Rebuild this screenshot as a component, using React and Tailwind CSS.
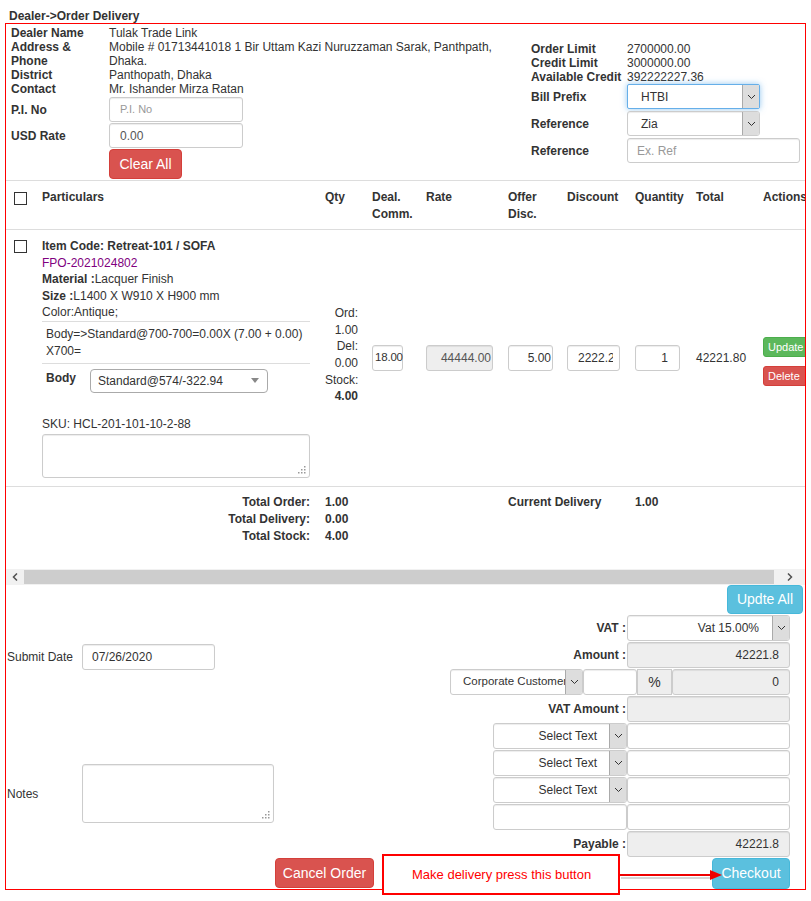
import React from 'react';

// gemeinsame Klassen für Eingabefelder
const box = 'border border-[#ccc] rounded-[3px] bg-white shadow-[inset_0_1px_1px_rgba(0,0,0,0.075)]';
const grey = 'border border-[#ccc] rounded-[3px] bg-[#eee] shadow-[inset_0_1px_1px_rgba(0,0,0,0.075)]';

function Chevron() {
  return (
    <svg width="9" height="6" viewBox="0 0 9 6">
      <path d="M1 1l3.5 3.5L8 1" fill="none" stroke="#333" strokeWidth="1" />
    </svg>
  );
}

function Grip() {
  return (
    <svg width="8" height="8" viewBox="0 0 8 8" className="absolute right-[3px] bottom-[3px]">
      <rect x="6" y="0" width="1.5" height="1.5" fill="#999" />
      <rect x="3" y="3" width="1.5" height="1.5" fill="#999" />
      <rect x="6" y="3" width="1.5" height="1.5" fill="#999" />
      <rect x="0" y="6" width="1.5" height="1.5" fill="#999" />
      <rect x="3" y="6" width="1.5" height="1.5" fill="#999" />
      <rect x="6" y="6" width="1.5" height="1.5" fill="#999" />
    </svg>
  );
}

function FakeSelect({ text, className, textClass }) {
  return (
    <div className={`flex overflow-hidden ${className}`}>
      <div className={`flex-1 flex items-center whitespace-nowrap overflow-hidden ${textClass}`}>{text}</div>
      <div className="w-[17px] shrink-0 bg-[#ddd] border-l border-[#aaa] flex items-center justify-center">
        <Chevron />
      </div>
    </div>
  );
}

function Check({ className }) {
  return <div className={`w-[13px] h-[13px] border border-[#333] bg-white ${className}`} />;
}

const cols = 'grid grid-cols-[36px_283px_47px_54px_82px_59px_68px_61px_67px_70px] w-[827px]';

export default function App() {
  return (
    <div className="relative w-[811px] h-[901px] bg-white font-['Liberation_Sans',Arial,sans-serif] text-[12px] text-[#333] pt-[9px]">
      <div className="pl-[9px] font-bold leading-[14px]">Dealer-&gt;Order Delivery</div>

      <div className="ml-[5px] w-[801px] border border-[#f00]">
        {/* Kopfbereich */}
        <div className="flex h-[157px] border-b border-[#ddd]">
          <div className="w-[525px] pl-[5px] pt-[2px]">
            <div className="grid grid-cols-[98px_400px] leading-[14px]">
              <b>Dealer Name</b>
              <span>Tulak Trade Link</span>
              <b className="pr-[20px]">Address &amp; Phone</b>
              <span>Mobile # 01713441018 1 Bir Uttam Kazi Nuruzzaman Sarak, Panthpath, Dhaka.</span>
              <b>District</b>
              <span>Panthopath, Dhaka</span>
              <b>Contact</b>
              <span>Mr. Ishander Mirza Ratan</span>
            </div>
            <div className="flex items-center mt-[1px]">
              <b className="w-[98px]">P.I. No</b>
              <div className={`w-[134px] h-[25px] flex items-center pl-[10px] text-[11px] text-[#999] ${box}`}>P.I. No</div>
            </div>
            <div className="flex items-center mt-[1px]">
              <b className="w-[98px]">USD Rate</b>
              <div className={`w-[134px] h-[25px] flex items-center pl-[10px] text-[#555] ${box}`}>0.00</div>
            </div>
            <button className="ml-[98px] mt-[1px] w-[73px] h-[30px] rounded-[4px] bg-[#d9534f] border border-[#d43f3a] text-white text-[14px]">
              Clear All
            </button>
          </div>
          <div className="pt-[18px]">
            <div className="grid grid-cols-[96px_auto] leading-[14px]">
              <b>Order Limit</b>
              <span>2700000.00</span>
              <b>Credit Limit</b>
              <span>3000000.00</span>
              <b>Available Credit</b>
              <span>392222227.36</span>
            </div>
            <div className="flex items-center">
              <b className="w-[96px]">Bill Prefix</b>
              <FakeSelect
                text="HTBI"
                className="w-[133px] h-[25px] border border-[#66afe9] rounded-[2px] bg-white shadow-[0_0_6px_rgba(102,175,233,0.7)]"
                textClass="pl-[13px]"
              />
            </div>
            <div className="flex items-center mt-[2px]">
              <b className="w-[96px]">Reference</b>
              <FakeSelect text="Zia" className={`w-[133px] h-[25px] ${box}`} textClass="pl-[13px]" />
            </div>
            <div className="flex items-center mt-[2px]">
              <b className="w-[96px]">Reference</b>
              <div className={`w-[173px] h-[25px] flex items-center pl-[9px] text-[#999] ${box}`}>Ex. Ref</div>
            </div>
          </div>
        </div>

        {/* Tabelle, horizontal abgeschnitten */}
        <div className="overflow-hidden">
          <div className={`${cols} h-[49px] border-b border-[#ddd] font-bold leading-[17px]`}>
            <div className="pl-[8px] pt-[11px]"><Check /></div>
            <div className="pt-[8px]">Particulars</div>
            <div className="pt-[8px]">Qty</div>
            <div className="pt-[8px]">Deal.<br />Comm.</div>
            <div className="pt-[8px]">Rate</div>
            <div className="pt-[8px]">Offer<br />Disc.</div>
            <div className="pt-[8px]">Discount</div>
            <div className="pt-[8px]">Quantity</div>
            <div className="pt-[8px]">Total</div>
            <div className="pt-[8px]">Actions</div>
          </div>

          <div className={`${cols} h-[257px] border-b border-[#ddd]`}>
            <div className="pl-[8px] pt-[10px]"><Check /></div>
            <div className="pt-[8px] pr-[15px]">
              <div className="leading-[16.5px]">
                <div className="font-bold">Item Code: Retreat-101 / SOFA</div>
                <div className="text-[#800080]">FPO-2021024802</div>
                <div><b>Material :</b>Lacquer Finish</div>
                <div><b>Size :</b>L1400 X W910 X H900 mm</div>
                <div>Color:Antique;</div>
              </div>
              <div className="border-t border-b border-[#ddd] pl-[4px] pt-[4px] pb-[3px] leading-[17px]">
                Body=&gt;Standard@700-700=0.00X (7.00 + 0.00) X700=
              </div>
              <div className="flex pl-[4px] pt-[5px]">
                <b className="w-[44px] leading-[17px] pt-[1px]">Body</b>
                <div className="w-[178px] h-[24px] border border-[#aaa] rounded-[4px] bg-white flex items-center justify-between pl-[7px] pr-[8px]">
                  <span>Standard@574/-322.94</span>
                  <svg width="8" height="5" viewBox="0 0 8 5"><path d="M0 0h8L4 5z" fill="#888" /></svg>
                </div>
              </div>
              <div className="mt-[23px] leading-[16.5px]">SKU: HCL-201-101-10-2-88</div>
              <div className={`relative mt-[2px] w-[268px] h-[44px] ${box}`}>
                <Grip />
              </div>
            </div>
            <div className="flex items-center pb-[6px]">
              <div className="w-[33px] text-right leading-[16.6px]">
                <div>Ord:</div>
                <div>1.00</div>
                <div>Del:</div>
                <div>0.00</div>
                <div>Stock:</div>
                <div className="font-bold">4.00</div>
              </div>
            </div>
            <div className="flex items-center">
              <div className={`w-[31px] h-[26px] flex items-center pl-[2px] whitespace-nowrap text-[11.5px] tracking-[-0.2px] ${box}`}>18.00</div>
            </div>
            <div className="flex items-center">
              <div className={`w-[67px] h-[26px] flex items-center justify-end pr-[1px] text-[#555] ${grey}`}>44444.00</div>
            </div>
            <div className="flex items-center">
              <div className={`w-[45px] h-[26px] flex items-center justify-end pr-[1px] ${box}`}>5.00</div>
            </div>
            <div className="flex items-center">
              <div className={`w-[53px] h-[26px] flex items-center pl-[10px] pr-[6px] ${box}`}>
                <div className="overflow-hidden whitespace-nowrap">2222.22</div>
              </div>
            </div>
            <div className="flex items-center">
              <div className={`w-[45px] h-[26px] flex items-center justify-end pr-[11px] ${box}`}>1</div>
            </div>
            <div className="flex items-center">42221.80</div>
            <div className="flex flex-col justify-center gap-[9px] pt-[7px]">
              <button className="w-[46px] h-[20px] rounded-[3px] bg-[#5cb85c] border border-[#4cae4c] text-white text-[11px] text-left pl-[4px]">Update</button>
              <button className="w-[46px] h-[20px] rounded-[3px] bg-[#d9534f] border border-[#d43f3a] text-white text-[11px] text-left pl-[4px]">Delete</button>
            </div>
          </div>

          <div className={`${cols} h-[82px] pt-[7px] font-bold leading-[17px]`}>
            <div />
            <div className="text-right pr-[15px]">
              <div>Total Order:</div>
              <div>Total Delivery:</div>
              <div>Total Stock:</div>
            </div>
            <div>
              <div>1.00</div>
              <div>0.00</div>
              <div>4.00</div>
            </div>
            <div />
            <div />
            <div className="col-span-2">Current Delivery</div>
            <div>1.00</div>
          </div>
        </div>

        {/* Scrollleiste */}
        <div className="flex h-[16px] bg-[#f1f1f1]">
          <div className="w-[18px] flex items-center justify-center">
            <svg width="6" height="8" viewBox="0 0 6 8"><path d="M5 0.5L1.5 4 5 7.5" fill="none" stroke="#505050" strokeWidth="1.5" /></svg>
          </div>
          <div className="w-[750px] my-[1px] bg-[#cdcdcd]" />
          <div className="flex-1 flex items-center justify-center">
            <svg width="6" height="8" viewBox="0 0 6 8"><path d="M1 0.5L4.5 4 1 7.5" fill="none" stroke="#505050" strokeWidth="1.5" /></svg>
          </div>
        </div>

        {/* Unterer Bereich */}
        <div className="flex justify-end pr-[2px] h-[30px]">
          <button className="w-[76px] h-[29px] rounded-[4px] bg-[#5bc0de] border border-[#46b8da] text-white text-[14px]">Updte All</button>
        </div>

        <div className="flex">
          <div className="flex-1 pl-[1px]">
            <div className="mt-[29px] flex items-center h-[26px]">
              <span className="w-[75px]">Submit Date</span>
              <div className={`w-[133px] h-[26px] flex items-center pl-[9px] ${box}`}>07/26/2020</div>
            </div>
            <div className="mt-[94px] flex items-center">
              <span className="w-[75px]">Notes</span>
              <div className={`relative w-[192px] h-[59px] ${box}`}>
                <Grip />
              </div>
            </div>
          </div>

          <div className="flex flex-col items-end pr-[15px] font-bold">
            <div className="flex items-center h-[26px] mb-[1px]">
              <span className="pr-[1px]">VAT :</span>
              <FakeSelect text="Vat 15.00%" className={`w-[163px] h-[26px] font-normal ${box}`} textClass="justify-end pr-[13px]" />
            </div>
            <div className="flex items-center h-[26px] mb-[1px]">
              <span className="pr-[1px]">Amount :</span>
              <div className={`w-[163px] h-[26px] flex items-center justify-end pr-[10px] font-normal ${grey}`}>42221.8</div>
            </div>
            <div className="flex items-center h-[26px] mb-[1px] font-normal">
              <FakeSelect text="Corporate Customer Discount" className={`w-[133px] h-[26px] ${box}`} textClass="pl-[12px] text-[11.5px]" />
              <div className={`w-[54px] h-[26px] ${box}`} />
              <div className="w-[35px] h-[26px] bg-[#eee] border border-[#ccc] flex items-center justify-center text-[14px]">%</div>
              <div className={`w-[118px] h-[26px] flex items-center justify-end pr-[10px] ${grey}`}>0</div>
            </div>
            <div className="flex items-center h-[26px] mb-[1px]">
              <span className="pr-[1px]">VAT Amount :</span>
              <div className={`w-[163px] h-[26px] ${grey}`} />
            </div>
            {[0, 1, 2].map((i) => (
              <div key={i} className="flex items-center h-[26px] mb-[1px] font-normal">
                <FakeSelect text="Select Text" className={`w-[134px] h-[26px] ${box}`} textClass="justify-end pr-[12px]" />
                <div className={`w-[163px] h-[26px] ${box}`} />
              </div>
            ))}
            <div className="flex items-center h-[26px] mb-[1px]">
              <div className={`w-[134px] h-[26px] ${box}`} />
              <div className={`w-[163px] h-[26px] ${box}`} />
            </div>
            <div className="flex items-center h-[26px] mb-[1px]">
              <span className="pr-[1px]">Payable :</span>
              <div className={`w-[163px] h-[26px] flex items-center justify-end pr-[10px] font-normal ${grey}`}>42221.8</div>
            </div>
          </div>
        </div>

        <div className="flex h-[31px] items-start">
          <button className="ml-[269px] w-[99px] h-[30px] rounded-[4px] bg-[#d9534f] border border-[#d43f3a] text-white text-[14px]">Cancel Order</button>
          <button className="ml-auto mr-[15px] w-[78px] h-[31px] rounded-[4px] bg-[#5bc0de] border border-[#46b8da] text-white text-[14px]">Checkout</button>
        </div>
      </div>

      {/* Hinweis-Annotation */}
      <div className="absolute left-[382px] top-[854px] w-[238px] h-[41px] border-2 border-[#f00] bg-white flex items-center pl-[28px] text-[13px] text-[#f00]">
        Make delivery press this button
      </div>
      <svg className="absolute left-[620px] top-[866px]" width="104" height="20" viewBox="0 0 104 20">
        <line x1="0" y1="10" x2="92" y2="10" stroke="#999" strokeWidth="2" opacity="0.4" transform="translate(1 2)" />
        <line x1="0" y1="9" x2="92" y2="9" stroke="#e00" strokeWidth="2" />
        <path d="M90 4L102 9L90 14z" fill="#e00" />
      </svg>
    </div>
  );
}
